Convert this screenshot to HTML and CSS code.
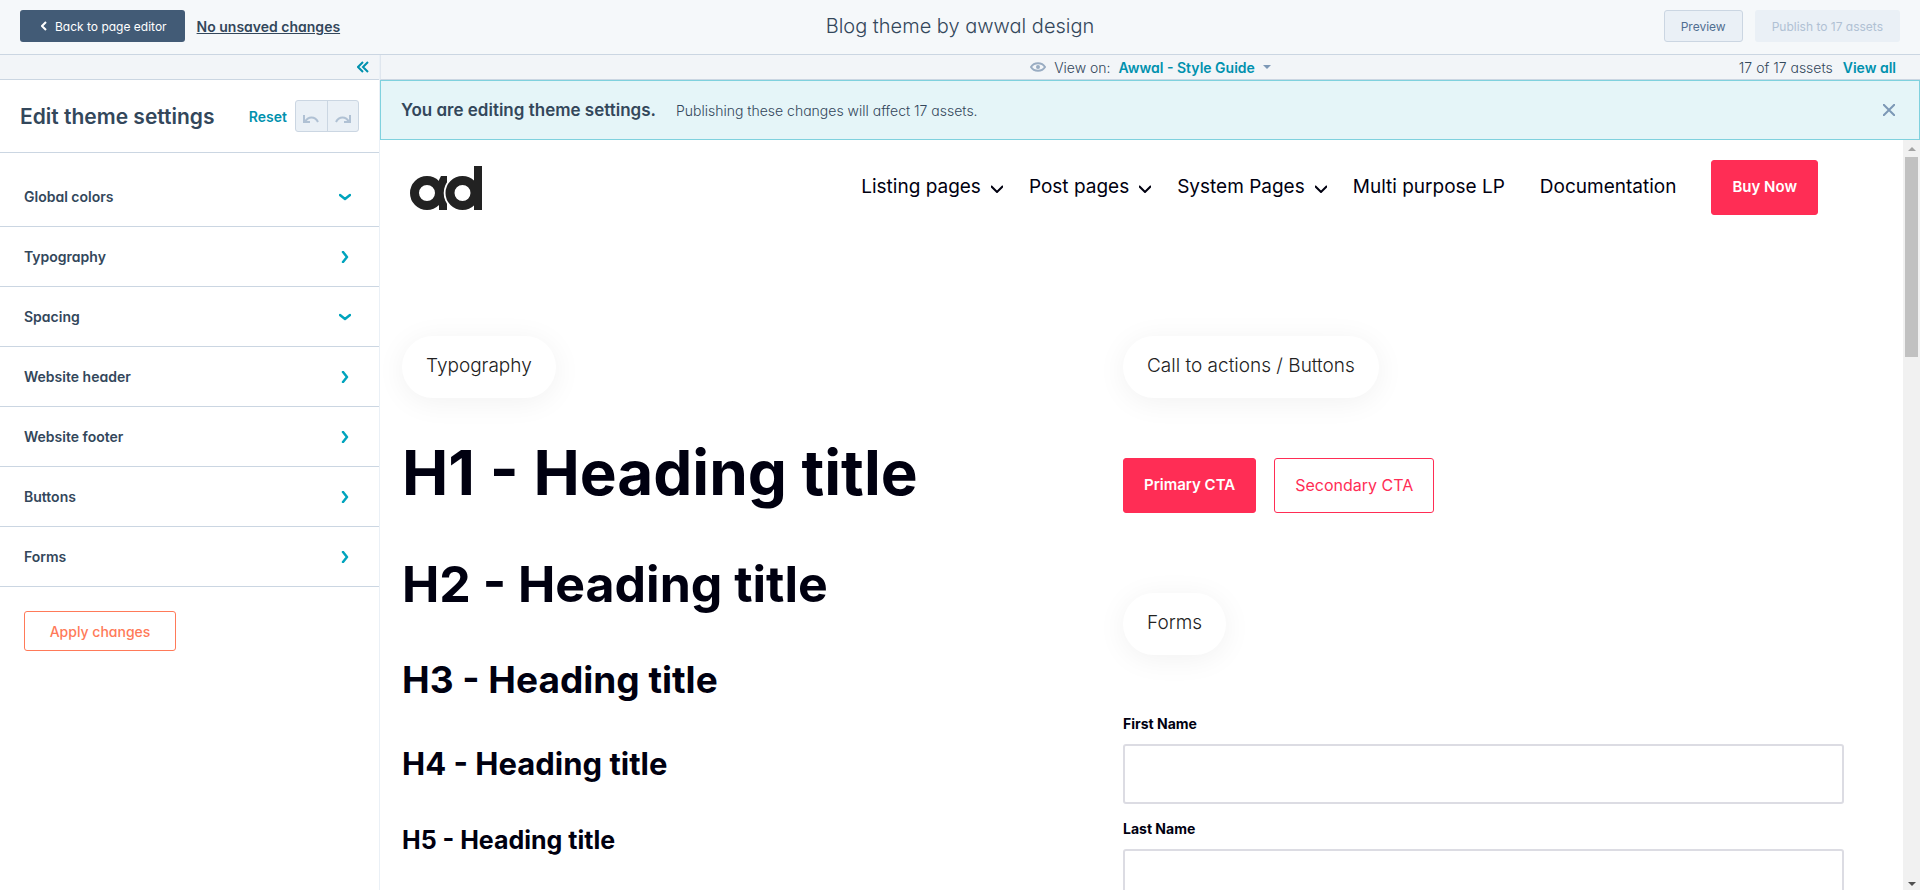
FILE: index.html
```html
<!DOCTYPE html>
<html lang="en">
<head>
    <meta charset="UTF-8">
    <meta name="viewport" content="width=device-width, initial-scale=1.0">
    <title>Edit theme settings</title>
    <link rel="stylesheet" href="styles.css">
</head>
<body>
    <header class="topbar">
        <div class="topbar-left">
            <button type="button" class="btn btn-dark">
                <svg width="6" height="10" viewBox="0 0 6 10"><path d="M5 1L1 5l4 4" fill="none" stroke="currentColor" stroke-width="2"/></svg>
                Back to page editor
            </button>
            <a href="#" class="save-status">No unsaved changes</a>
        </div>
        <h1 class="topbar-title">Blog theme by awwal design</h1>
        <div class="topbar-right">
            <button type="button" class="btn btn-light">Preview</button>
            <button type="button" class="btn btn-disabled" disabled>Publish to 17 assets</button>
        </div>
    </header>

    <div class="workspace">
        <aside class="sidebar">
            <div class="sidebar-strip">
                <button type="button" class="icon-btn" aria-label="Collapse sidebar">
                    <svg width="12" height="12" viewBox="0 0 12 12"><path d="M6 1L1 6l5 5M11 1L6 6l5 5" fill="none" stroke="#0091ae" stroke-width="2"/></svg>
                </button>
            </div>
            <div class="sidebar-header">
                <h2>Edit theme settings</h2>
                <a href="#" class="reset">Reset</a>
                <div class="history">
                    <button type="button" aria-label="Undo" disabled>
                        <svg width="16" height="10" viewBox="0 0 16 10"><path d="M1 1v7h6M2 8C5 2 12 2 15 8" fill="none" stroke="#b0c1d4" stroke-width="2"/></svg>
                    </button>
                    <button type="button" aria-label="Redo" disabled>
                        <svg width="16" height="10" viewBox="0 0 16 10"><path d="M15 1v7H9M14 8C11 2 4 2 1 8" fill="none" stroke="#b0c1d4" stroke-width="2"/></svg>
                    </button>
                </div>
            </div>
            <nav class="settings">
                <button type="button">Global colors <svg width="12" height="12" viewBox="0 0 12 12"><path d="M1 4l5 4 5-4"/></svg></button>
                <button type="button">Typography <svg width="12" height="12" viewBox="0 0 12 12"><path d="M4 1l4 5-4 5"/></svg></button>
                <button type="button">Spacing <svg width="12" height="12" viewBox="0 0 12 12"><path d="M1 4l5 4 5-4"/></svg></button>
                <button type="button">Website header <svg width="12" height="12" viewBox="0 0 12 12"><path d="M4 1l4 5-4 5"/></svg></button>
                <button type="button">Website footer <svg width="12" height="12" viewBox="0 0 12 12"><path d="M4 1l4 5-4 5"/></svg></button>
                <button type="button">Buttons <svg width="12" height="12" viewBox="0 0 12 12"><path d="M4 1l4 5-4 5"/></svg></button>
                <button type="button">Forms <svg width="12" height="12" viewBox="0 0 12 12"><path d="M4 1l4 5-4 5"/></svg></button>
            </nav>
            <button type="button" class="apply">Apply changes</button>
        </aside>

        <main class="main">
            <div class="view-strip">
                <div class="view-on">
                    <svg width="16" height="10" viewBox="0 0 16 10"><path d="M1 5C4 0 12 0 15 5C12 10 4 10 1 5Z" fill="none" stroke="#99acc2" stroke-width="2"/><circle cx="8" cy="5" r="2" fill="#99acc2"/></svg>
                    <span>View on:</span>
                    <a href="#">Awwal - Style Guide</a>
                    <svg width="8" height="4" viewBox="0 0 8 4"><path d="M0 0h8L4 4z" fill="#7c98b6"/></svg>
                </div>
                <div class="assets">
                    <span>17 of 17 assets</span>
                    <a href="#">View all</a>
                </div>
            </div>

            <div class="banner">
                <strong>You are editing theme settings.</strong>
                <span>Publishing these changes will affect 17 assets.</span>
                <button type="button" class="icon-btn" aria-label="Close">
                    <svg width="12" height="12" viewBox="0 0 12 12"><path d="M0 0l12 12M12 0L0 12" fill="none" stroke="#7c98b6" stroke-width="2"/></svg>
                </button>
            </div>

            <div class="preview">
                <div class="page">
                    <div class="site-header">
                        <a href="#" class="logo" aria-label="awwal design">
                            <svg width="72" height="44" viewBox="0 0 72 44">
                                <circle cx="17" cy="27" r="12.5" fill="none" stroke="#222" stroke-width="9"/>
                                <path d="M31 10h6v34h-8V14z" fill="#222"/>
                                <circle cx="52.5" cy="27" r="18.8" fill="#fff"/>
                                <circle cx="52.5" cy="27" r="12.5" fill="none" stroke="#222" stroke-width="9"/>
                                <path d="M64 0h8v44h-8z" fill="#222"/>
                            </svg>
                        </a>
                        <nav class="site-nav">
                            <a href="#" class="has-menu">Listing pages <svg width="12" height="8" viewBox="0 0 12 8"><path d="M0 1l6 6 6-6"/></svg></a>
                            <a href="#" class="has-menu">Post pages <svg width="12" height="8" viewBox="0 0 12 8"><path d="M0 1l6 6 6-6"/></svg></a>
                            <a href="#" class="has-menu">System Pages <svg width="12" height="8" viewBox="0 0 12 8"><path d="M0 1l6 6 6-6"/></svg></a>
                            <a href="#">Multi purpose LP</a>
                            <a href="#">Documentation</a>
                            <button type="button" class="cta cta-primary">Buy Now</button>
                        </nav>
                    </div>

                    <div class="columns">
                        <section class="type-samples">
                            <div class="pill">Typography</div>
                            <h1>H1 - Heading title</h1>
                            <h2>H2 - Heading title</h2>
                            <h3>H3 - Heading title</h3>
                            <h4>H4 - Heading title</h4>
                            <h5>H5 - Heading title</h5>
                        </section>
                        <section>
                            <div class="pill">Call to actions / Buttons</div>
                            <div class="cta-row">
                                <button type="button" class="cta cta-primary">Primary CTA</button>
                                <button type="button" class="cta cta-secondary">Secondary CTA</button>
                            </div>
                            <div class="pill">Forms</div>
                            <form class="sample-form">
                                <label for="firstname">First Name</label>
                                <input type="text" id="firstname" name="firstname">
                                <label for="lastname">Last Name</label>
                                <input type="text" id="lastname" name="lastname">
                            </form>
                        </section>
                    </div>
                </div>
                <div class="scrollbar">
                    <svg width="8" height="4" viewBox="0 0 8 4"><path d="M0 4h8L4 0z" fill="#a3a3a3"/></svg>
                    <div class="thumb"></div>
                    <svg class="arrow-down" width="8" height="4" viewBox="0 0 8 4"><path d="M0 0h8L4 4z" fill="#505050"/></svg>
                </div>
            </div>
        </main>
    </div>
</body>
</html>
```
FILE: styles.css
```css
* {
    box-sizing: border-box;
}
body {
    margin: 0;
    height: 100vh;
    display: flex;
    flex-direction: column;
    overflow: hidden;
    font-family: Inter, sans-serif;
    font-feature-settings: "cv11";
    font-size: 14px;
    color: #33475b;
    background: #fff;
}
h1, h2, h3, h4, h5 {
    margin: 0;
}
button {
    font: inherit;
    font-feature-settings: inherit;
    cursor: pointer;
}
svg {
    display: block;
    flex: none;
}
a {
    color: #0091ae;
    font-weight: 600;
    text-decoration: none;
}

/* top bar */
.topbar {
    display: grid;
    grid-template-columns: 1fr auto 1fr;
    align-items: center;
    height: 55px;
    padding: 0 20px 2px;
    flex: none;
    background: #f5f8fa;
    border-bottom: 1px solid #cbd6e2;
}
.topbar-left {
    display: flex;
    align-items: center;
    gap: 12px;
}
.topbar-right {
    display: flex;
    justify-content: flex-end;
    gap: 12px;
}
.topbar-title {
    font-size: 20px;
    font-weight: 300;
}
.btn {
    display: flex;
    align-items: center;
    justify-content: center;
    height: 32px;
    padding: 0 16px;
    font-size: 12px;
    border: 1px solid transparent;
    border-radius: 3px;
}
.btn-dark {
    gap: 8px;
    padding: 0 17px 0 20px;
    background: #425b76;
    color: #fff;
}
.btn-light {
    background: #eaf0f6;
    border-color: #cbd6e2;
    color: #506e91;
}
.btn-disabled {
    background: #eaf0f6;
    color: #b0c1d4;
}
.save-status {
    color: #33475b;
    text-decoration: underline;
}
.icon-btn {
    padding: 0;
    border: 0;
    background: none;
}

.workspace {
    display: flex;
    flex: 1;
    min-height: 0;
}

/* sidebar */
.sidebar {
    width: 380px;
    flex: none;
    border-right: 1px solid #eaf0f6;
}
.sidebar-strip {
    display: flex;
    align-items: center;
    justify-content: flex-end;
    height: 25px;
    padding-right: 10px;
    background: #f2f5f8;
    border-bottom: 1px solid #cbd6e2;
}
.sidebar-header {
    display: flex;
    align-items: center;
    height: 73px;
    padding: 0 20px;
    border-bottom: 1px solid #cbd6e2;
}
.sidebar-header h2 {
    flex: 1;
    font-size: 21px;
    font-weight: 600;
}
.reset {
    margin-right: 8px;
}
.history {
    display: flex;
    border: 1px solid #cbd6e2;
    border-radius: 3px;
    background: #eaf0f6;
}
.history button {
    width: 31px;
    height: 30px;
    padding: 6px 7px 0;
    border: 0;
    background: none;
}
.history button + button {
    border-left: 1px solid #cbd6e2;
}
.settings {
    padding-top: 14px;
}
.settings button {
    display: flex;
    align-items: center;
    justify-content: space-between;
    width: 100%;
    height: 60px;
    padding: 0 28px 0 24px;
    border: 0;
    border-bottom: 1px solid #cbd6e2;
    background: none;
    color: #33475b;
    font-weight: 600;
}
.settings path {
    fill: none;
    stroke: #00a4bd;
    stroke-width: 2.5;
    stroke-linecap: round;
    stroke-linejoin: round;
}
.apply {
    width: 152px;
    height: 40px;
    margin: 24px;
    border: 1px solid #ff7a59;
    border-radius: 3px;
    background: #fff;
    color: #ff7a59;
    font-weight: 500;
}

/* preview column */
.main {
    display: flex;
    flex-direction: column;
    flex: 1;
    min-width: 0;
}
.view-strip {
    display: grid;
    grid-template-columns: 1fr auto 1fr;
    align-items: center;
    height: 25px;
    flex: none;
    padding: 0 24px;
    background: #f2f5f8;
    border-bottom: 1px solid #cbd6e2;
    border-left: 1px solid #dfe6ee;
}
.view-strip span {
    font-weight: 300;
}
.view-on {
    grid-column: 2;
    display: flex;
    align-items: center;
    gap: 8px;
}
.assets {
    display: flex;
    justify-content: flex-end;
    gap: 10px;
}
.banner {
    display: flex;
    align-items: center;
    gap: 20px;
    height: 60px;
    flex: none;
    padding: 0 24px 0 20px;
    background: #e5f5f8;
    border: 1px solid #7fd1de;
}
.banner strong {
    font-size: 17px;
    font-weight: 600;
}
.banner span {
    font-weight: 300;
}
.banner .icon-btn {
    margin-left: auto;
}
.preview {
    display: flex;
    flex: 1;
    min-height: 0;
    overflow: hidden;
    font-feature-settings: normal;
    font-size: 19px;
    color: #000010;
}
.page {
    flex: 1;
    min-width: 0;
    padding: 20px 59px 0 22px;
}
.site-header {
    display: flex;
    align-items: center;
    justify-content: space-between;
    padding: 0 26px 0 8px;
}
.site-nav {
    display: flex;
    align-items: center;
    gap: 35px;
}
.site-nav a {
    display: flex;
    align-items: center;
    gap: 10px;
    padding-bottom: 2px;
    color: #000010;
    font-weight: 400;
}
.site-nav .has-menu {
    margin-right: -9px;
}
.site-nav svg {
    margin-top: 4px;
}
.site-nav path {
    fill: none;
    stroke: #000010;
    stroke-width: 2;
}
.cta {
    height: 55px;
    padding: 0 20px 2px;
    border: 1px solid #ff2d55;
    border-radius: 3px;
}
.cta-primary {
    background: #ff2d55;
    color: #fff;
    font-size: 15px;
    font-weight: 600;
}
.cta-secondary {
    background: #fff;
    color: #ff2d55;
    font-size: 16px;
}
.columns {
    display: grid;
    grid-template-columns: 1fr 1fr;
    padding-top: 121px;
}
.pill {
    width: fit-content;
    padding: 0 24px 2px;
    line-height: 60px;
    border-radius: 31px;
    box-shadow: 0 4px 30px rgba(0, 0, 0, 0.06);
    color: #222;
    font-weight: 300;
}
.type-samples .pill {
    margin-bottom: 38px;
}
.type-samples h1, .type-samples h2, .type-samples h3, .type-samples h4, .type-samples h5 {
    margin-bottom: 44px;
    font-weight: 700;
}
.type-samples h1 {
    font-size: 62px;
    line-height: 74px;
}
.type-samples h2 {
    font-size: 50px;
    line-height: 60px;
}
.type-samples h3 {
    font-size: 37px;
    line-height: 44px;
}
.type-samples h4 {
    font-size: 31px;
    line-height: 36px;
}
.type-samples h5 {
    font-size: 25px;
    line-height: 28px;
}
.cta-row {
    display: flex;
    gap: 18px;
    margin: 60px 0 80px;
}
.sample-form {
    padding-top: 60px;
}
.sample-form label {
    display: block;
    margin-bottom: 11px;
    font-size: 14px;
    line-height: 18px;
    font-weight: 700;
}
.sample-form input {
    display: block;
    width: 100%;
    height: 60px;
    margin-bottom: 16px;
    padding: 0 16px;
    border: 2px solid #dcdce3;
    border-radius: 3px;
    font: inherit;
}
.scrollbar {
    display: flex;
    flex-direction: column;
    align-items: center;
    gap: 6px;
    width: 17px;
    padding: 7px 0 4px;
    background: #f1f1f1;
}
.thumb {
    width: 13px;
    height: 200px;
    background: #c1c1c1;
}
.arrow-down {
    margin-top: auto;
}
```
